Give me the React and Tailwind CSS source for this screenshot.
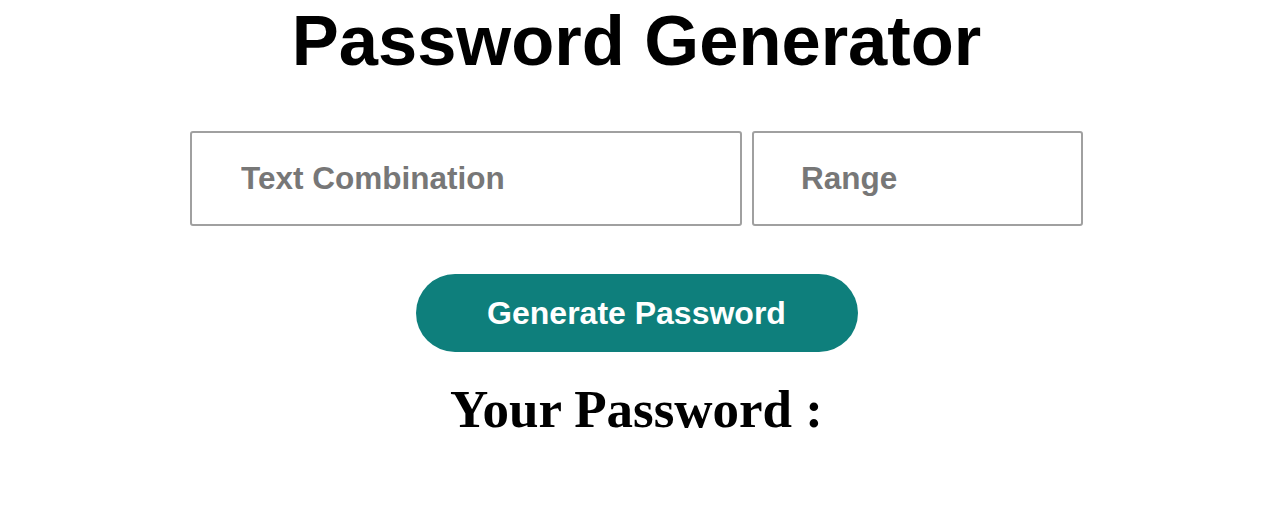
import React, { useState } from 'react';

const App = () => {
  const [text, setText] = useState('');
  const [range, setRange] = useState('');

  return (
    <div className="min-h-screen bg-white pr-[7px] font-['Liberation_Sans',Arial,sans-serif]">
      <div className="flex flex-col items-center">
        <h1 className="pt-[3px] text-[70.5px] font-bold leading-[76px] text-black">Password Generator</h1>

        {/* Inputs */}
        <div className="mt-[52px] flex gap-[10px]">
          <input
            type="text"
            value={text}
            onChange={(e) => setText(e.target.value)}
            placeholder="Text Combination"
            className="h-[95px] w-[552px] rounded-[3px] border-2 border-[#a0a0a0] pl-[49px] text-[31.5px] font-bold text-[#333] outline-none placeholder:text-[#777]"
          />
          <input
            type="text"
            value={range}
            onChange={(e) => setRange(e.target.value)}
            placeholder="Range"
            className="h-[95px] w-[331px] rounded-[3px] border-2 border-[#a0a0a0] pl-[47px] text-[31.5px] font-bold text-[#333] outline-none placeholder:text-[#777]"
          />
        </div>

        <button className="mt-[48px] h-[78px] w-[442px] rounded-full bg-[#0e7f7c] text-[32px] font-bold text-white">
          Generate Password
        </button>

        <h2 className="mt-[31px] font-['Liberation_Serif','Times_New_Roman',serif] text-[53px] font-bold leading-none text-black">
          Your Password :
        </h2>
      </div>
    </div>
  );
};

export default App;
